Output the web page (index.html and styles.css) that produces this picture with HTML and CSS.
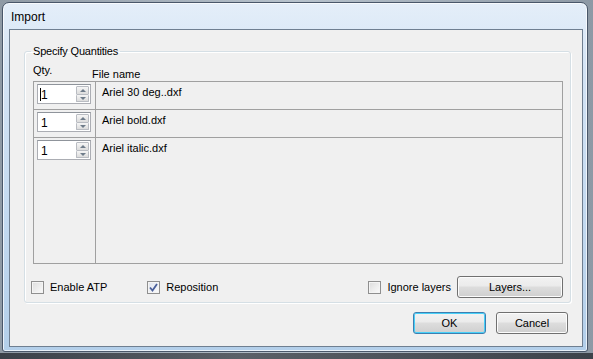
FILE: index.html
```html
<!DOCTYPE html>
<html>
<head>
<meta charset="utf-8">
<link rel="stylesheet" href="styles.css">
</head>
<body>
<div class="desk">
  <div class="window">
    <div class="titlebar"><span class="title">Import</span></div>
    <div class="client">
      <fieldset class="group">
        <legend class="legend">Specify Quantities</legend>
        <div class="heads">
          <span class="h-qty">Qty.</span>
          <span class="h-name">File name</span>
        </div>
        <div class="grid">
          <div class="row">
            <div class="cell-qty">
              <div class="spin"><span class="val"><span class="caret"></span>1</span><span class="arrows"><span class="up"></span><span class="dn"></span></span></div>
            </div>
            <div class="cell-name">Ariel 30 deg..dxf</div>
          </div>
          <div class="row">
            <div class="cell-qty">
              <div class="spin"><span class="val">1</span><span class="arrows"><span class="up"></span><span class="dn"></span></span></div>
            </div>
            <div class="cell-name">Ariel bold.dxf</div>
          </div>
          <div class="row last">
            <div class="cell-qty">
              <div class="spin"><span class="val">1</span><span class="arrows"><span class="up"></span><span class="dn"></span></span></div>
            </div>
            <div class="cell-name">Ariel italic.dxf</div>
          </div>
        </div>
        <div class="options">
          <label class="check"><span class="box"></span>Enable ATP</label>
          <label class="check repo"><span class="box checked"><svg width="9" height="9" viewBox="0 0 9 9"><path d="M1 4.5 L3.5 7.5 L8 1" fill="none" stroke="#4a5f9a" stroke-width="1.8"/></svg></span>Reposition</label>
          <span class="spacer"></span>
          <label class="check"><span class="box"></span>Ignore layers</label>
          <button class="btn layers">Layers...</button>
        </div>
      </fieldset>
      <div class="actions">
        <button class="btn ok">OK</button>
        <button class="btn cancel">Cancel</button>
      </div>
    </div>
  </div>
  <div class="below"></div>
</div>
</body>
</html>
```
FILE: styles.css
```css
html, body {
  margin: 0;
  padding: 0;
}
body {
  width: 593px;
  height: 359px;
  overflow: hidden;
  background: #7d8894;
  font-family: "Liberation Sans", Arial, sans-serif;
  font-size: 11px;
  color: #000;
}
.desk {
  position: relative;
  width: 593px;
  height: 359px;
  background: linear-gradient(90deg, #8f9aa5 0%, #b7c2cc 50%, #8d99a5 100%);
}
.below {
  position: absolute;
  left: 0;
  right: 0;
  bottom: 0;
  height: 6px;
  background: linear-gradient(90deg, #3a4048, #5a6068 40%, #3c424a);
}
.window {
  position: absolute;
  left: 2px;
  top: 2px;
  width: 586px;
  height: 350px;
  border: 1px solid #49576a;
  border-radius: 7px 7px 3px 3px;
  background: linear-gradient(180deg, #e4eef9 0%, #d3e3f4 20%, #c4daf0 60%, #b3cfea 100%);
  box-shadow: inset 0 0 0 1px rgba(255,255,255,0.7);
  display: flex;
  flex-direction: column;
  padding: 0 4px 4px 6px;
  box-sizing: border-box;
}
.titlebar {
  height: 26px;
  flex: none;
  display: flex;
  align-items: center;
}
.title {
  font-family: "Liberation Sans", Arial, sans-serif;
  font-size: 12px;
  margin-left: 2px;
  margin-top: 2px;
  color: #000;
}
.client {
  flex: 1;
  background: #f0f0f0;
  border: 1px solid #6f7f91;
  display: flex;
  flex-direction: column;
  padding: 15px 11px 0 14px;
}
.group {
  margin: 0;
  border: 1px solid #d5dfe5;
  border-radius: 3px;
  padding: 0 7px 0 8px;
  height: 258px;
  box-sizing: border-box;
  box-shadow: inset 1px 1px 0 #fff, 1px 1px 0 #fff;
}
.legend {
  padding: 0 2px;
  margin-left: -2px;
  font-size: 11px;
  line-height: 13px;
  letter-spacing: -0.2px;
}
.heads {
  position: relative;
  height: 17px;
  margin-top: 6px;
}
.h-qty {
  position: absolute;
  left: 0;
  top: 0;
}
.h-name {
  position: absolute;
  left: 59px;
  top: 4px;
}
.grid {
  border: 1px solid #a0a0a0;
  height: 183px;
  box-sizing: border-box;
  display: flex;
  flex-direction: column;
}
.row {
  display: flex;
  height: 28px;
  border-bottom: 1px solid #a0a0a0;
  box-sizing: border-box;
}
.row.last {
  flex: 1;
  border-bottom: none;
}
.cell-qty {
  width: 62px;
  border-right: 1px solid #a0a0a0;
  padding: 2px 0 0 3px;
  box-sizing: border-box;
  flex: none;
}
.cell-name {
  padding: 4px 0 0 6px;
}
.spin {
  width: 54px;
  height: 20px;
  border: 1px solid #abadb3;
  border-top-color: #8f949b;
  background: #fff;
  box-sizing: border-box;
  display: flex;
}
.val {
  flex: 1;
  padding: 3px 0 0 3px;
  font-size: 12px;
  position: relative;
}
.caret {
  position: absolute;
  left: 2px;
  top: 3px;
  width: 1px;
  height: 13px;
  background: #000;
}
.arrows {
  width: 14px;
  display: flex;
  flex-direction: column;
  padding: 1px 1px 1px 0;
  box-sizing: border-box;
}
.up, .dn {
  flex: 1;
  border: 1px solid #b9bcc2;
  background: linear-gradient(#f6f6f6, #dcdcdc);
  position: relative;
  border-radius: 1px;
}
.dn { border-top: none; }
.up::after, .dn::after {
  content: "";
  position: absolute;
  left: 3px;
  border-left: 3px solid transparent;
  border-right: 3px solid transparent;
}
.up::after {
  top: 2px;
  border-bottom: 3px solid #6f7c8a;
}
.dn::after {
  top: 2px;
  border-top: 3px solid #6f7c8a;
}
.options {
  display: flex;
  align-items: center;
  height: 38px;
  margin-top: 4px;
}
.check {
  display: flex;
  align-items: center;
  font-size: 11px;
}
.check:first-child {
  margin-left: -2px;
}
.repo {
  margin-left: 40px;
}
.box {
  width: 13px;
  height: 13px;
  box-sizing: border-box;
  border: 1px solid #8f8f8f;
  background: linear-gradient(135deg, #dcdcdc, #fbfbfb);
  box-shadow: inset 0 0 0 1px #f4f4f4;
  margin-right: 6px;
  display: flex;
  align-items: center;
  justify-content: center;
}
.box.checked {
  background: linear-gradient(135deg, #dfe4ee, #fbfbfb);
}
.spacer { flex: 1; }
.btn {
  font-family: "Liberation Sans", Arial, sans-serif;
  font-size: 11px;
  color: #000;
  height: 22px;
  border: 1px solid #707070;
  border-radius: 3px;
  background: linear-gradient(180deg, #f2f2f2 0%, #ebebeb 45%, #dddddd 50%, #cfcfcf 100%);
  box-shadow: inset 0 0 0 1px #fcfcfc;
  padding: 0;
}
.layers {
  width: 106px;
  margin-left: 6px;
}
.actions {
  display: flex;
  justify-content: flex-end;
  gap: 10px;
  margin-top: 9px;
  padding-right: 3px;
}
.ok {
  width: 73px;
  border-color: #3c7fb1;
  box-shadow: inset 0 0 0 1px #48d0f8;
}
.cancel {
  width: 72px;
}
```
